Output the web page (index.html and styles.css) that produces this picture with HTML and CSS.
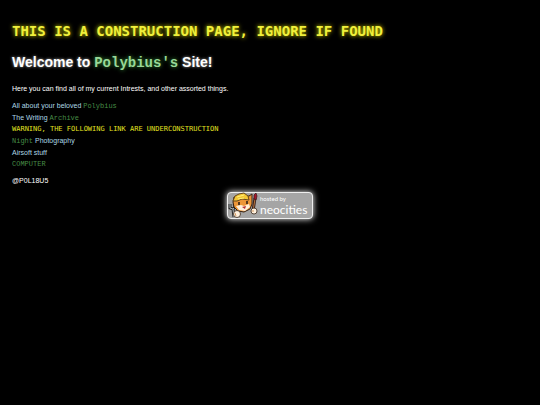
FILE: index.html
```html
<!DOCTYPE html>
<html lang="en">
<head>
    <meta charset="UTF-8">
    <meta name="viewport" content="width=device-width, initial-scale=1">
    <title>Polybius's Site</title>
    <link rel="stylesheet" href="styles.css">
</head>
<body>
    <h1 class="warning">THIS IS A CONSTRUCTION PAGE, IGNORE IF FOUND</h1>
    <h1>Welcome to <span class="code">Polybius's</span> Site!</h1>

    <p>Here you can find all of my current Intrests, and other assorted things.</p>

    <ul class="links">
        <li><a href="#polybius">All about your beloved <span class="code">Polybius</span></a></li>
        <li><a href="#archive">The Writing <span class="code">Archive</span></a></li>
        <li class="notice">WARNING, THE FOLLOWING LINK ARE UNDERCONSTRUCTION</li>
        <li><a href="#photography"><span class="code">Night</span> Photography</a></li>
        <li><a href="#airsoft">Airsoft stuff</a></li>
        <li><a href="#computer"><span class="code">COMPUTER</span></a></li>
    </ul>

    <p class="handle">@P0L18U5</p>

    <a class="badge" href="#neocities">
        <!-- cat with a wrench and a paint brush -->
        <svg class="cat" viewBox="0 0 32 28" aria-hidden="true">
            <path d="M2 12v4l3 1 2-2-1-3M5 17l1 8" fill="none" stroke="#2b2b2b" stroke-width="3"/>
            <path d="M2 12v4l3 1 2-2-1-3M5 17l1 8" fill="none" stroke="#a9b1b5"/>
            <path d="M25 19l2-13" stroke="#3a2018" stroke-width="3"/>
            <path d="M25 19l2-12" stroke="#b87540"/>
            <path d="M26 7l0-4 2-2 1 3-1 4z" fill="#a5182c" stroke="#38151a" stroke-width=".7"/>
            <path d="M5 10l1-5 15-1 3-2 0 10-2 5-6 3-6-1-4-4z" fill="#ed9638" stroke="#352317"/>
            <path d="M5 9l2-5 4-2 5-1 4 3 1 4-7-1-5 2z" fill="#f3c736" stroke="#67471c"/>
            <path d="M9 5l7-2M10 7l6-1" stroke="#fff078"/>
            <path d="M8 14l5-1 3 1 5-2 1 3-5 4-6-1z" fill="#fff0dc"/>
            <path d="M11 10v3M19 9v3" stroke="#291a13" stroke-width="1.5"/>
            <path d="M14 15l4-1-1 3z" fill="#b62c31"/>
            <circle cx="9" cy="22" r="3.5" fill="#fff1df" stroke="#3a281c" stroke-width=".8"/>
            <circle cx="26" cy="19" r="3" fill="#fff1df" stroke="#3a281c" stroke-width=".8"/>
            <path d="M7 21l1 3M25 18v2" stroke="#d59b62"/>
        </svg>
        <span class="badge-text">
            <span class="hosted">hosted by</span>
            <span class="neocities">neocities</span>
        </span>
    </a>
</body>
</html>
```
FILE: styles.css
```css
body {
    margin: 0;
    padding: 23px 12px;
    background-color: #000;
    color: #fff;
    font-family: "Liberation Sans", Arial, sans-serif;
    font-size: 7px;
    line-height: 12px;
}
h1 {
    margin: 0 0 15px;
    font-size: 14px;
    line-height: 16px;
    text-shadow: 0 0 3px #aaa;
}
h1 + p {
    margin-top: -3px;
}
.warning {
    color: #f0f03c;
    font-family: "DejaVu Sans Mono", monospace;
    text-shadow: 0 0 4px #e8e800;
}
.code {
    color: #468c46;
    font-family: "Liberation Mono", "Courier New", monospace;
}
h1 .code {
    color: #98d898;
    text-shadow: 0 0 4px #3c9c3c;
}
p {
    margin: 0 0 5px;
}
.links {
    margin: 0;
    padding: 0;
    list-style: none;
    line-height: 11px;
}
.links a {
    color: #add8e6;
    text-decoration: none;
}
.notice {
    color: #e0e020;
    font-family: "DejaVu Sans Mono", monospace;
}
.handle {
    margin-top: 5px;
}
.badge {
    display: flex;
    align-items: center;
    width: 84px;
    height: 25px;
    margin: 0 auto;
    border: 1px solid #eee;
    border-radius: 4px;
    background-color: #a5a5a5;
    box-shadow: 0 0 6px #fff;
    color: #fff;
    text-decoration: none;
}
.cat {
    width: 32px;
    height: 28px;
}
.badge-text {
    display: flex;
    flex-direction: column;
    font-family: Lato, "Open Sans", sans-serif;
}
.hosted {
    font-size: 6px;
    line-height: 8px;
}
.neocities {
    font-size: 12px;
    line-height: 14px;
}
```
